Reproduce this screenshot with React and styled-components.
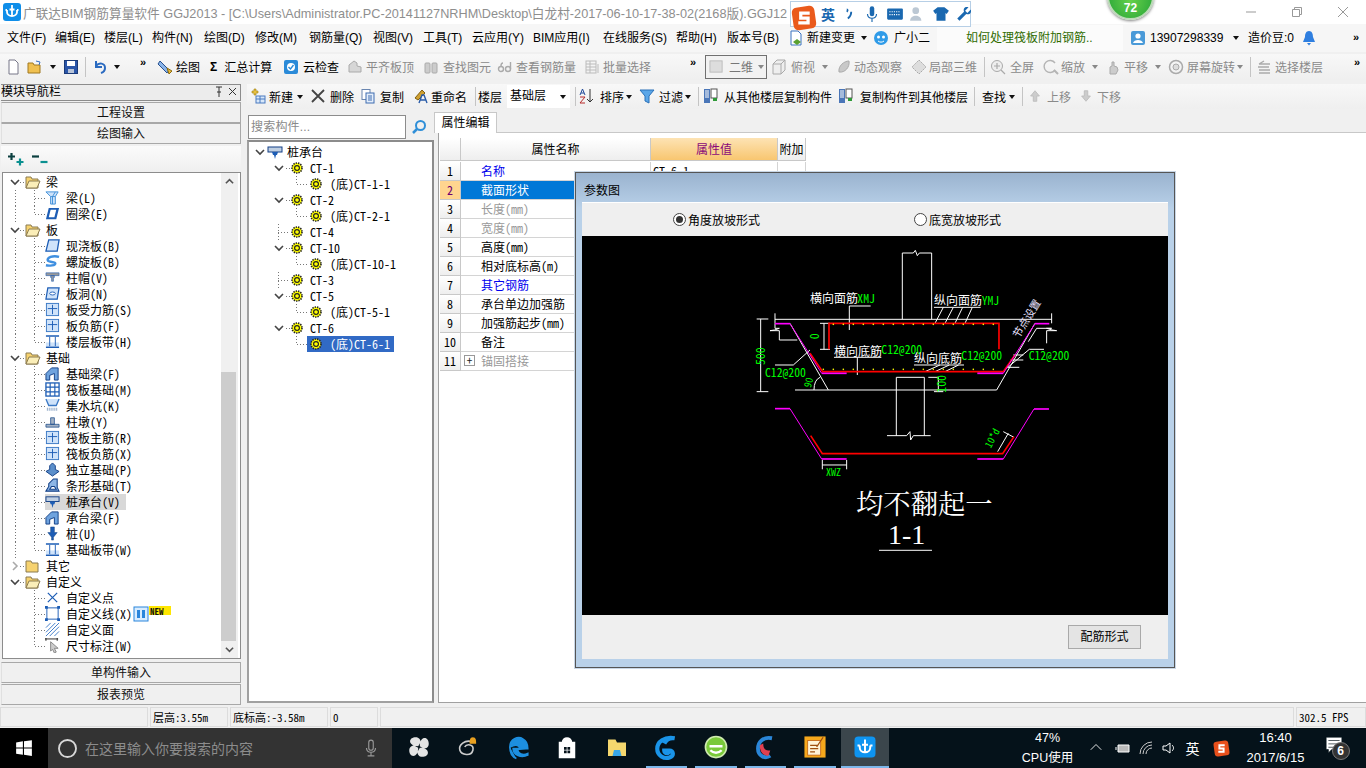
import React from "react";
import styled, { createGlobalStyle } from "styled-components";

const GlobalStyle = createGlobalStyle`
  html, body { margin: 0; padding: 0; background: #f0f0f0; }
  body { font-family: "Liberation Sans", "Noto Sans CJK SC", sans-serif; font-size: 12px; color: #000; overflow: hidden; }
  * { box-sizing: border-box; }
`;

const mono = `"Noto Sans Mono CJK SC", "Noto Sans CJK SC", "Liberation Mono", monospace`;

const Page = styled.div`
  position: relative;
  width: 1366px;
  height: 768px;
  overflow: hidden;
  display: flex;
  flex-direction: column;
  background: #f0f0f0;
`;

/* title bar */
const TitleBar = styled.div`
  height: 24px;
  background: #fff;
  display: flex;
  align-items: center;
  padding-left: 2px;
  color: #8e8e8e;
  font-size: 12.7px;
  white-space: nowrap;
`;
const TitleText = styled.span`
  margin-left: 1px;
  flex: 1;
  overflow: hidden;
`;
const WinBtn = styled.span`
  width: 46px;
  height: 24px;
  display: flex;
  align-items: center;
  justify-content: center;
`;

/* menu */
const MenuBar = styled.div`
  height: 28px;
  background: #f6f6f6;
  display: flex;
  align-items: center;
  position: relative;
  white-space: nowrap;
`;
const MenuItem = styled.span`
  position: absolute;
  left: ${(p) => p.$x}px;
  top: 6px;
  line-height: 16px;
  color: ${(p) => p.$color || "#000"};
  display: flex;
  align-items: center;
`;
const Hint = styled.div`
  position: absolute;
  left: 937px;
  top: 1px;
  width: 186px;
  height: 26px;
  background: #fbfbfb;
  color: #2f6b00;
  padding: 5px 0 0 29px;
  line-height: 16px;
`;

const Tools = styled.div`
  height: ${(p) => p.$h || 26}px;
  margin-top: ${(p) => p.$top || 0}px;
  margin-left: ${(p) => p.$left || 0}px;
  background: linear-gradient(#f8f8f8, #efefef);
  position: relative;
  white-space: nowrap;
`;
const Tool = styled.span`
  position: absolute;
  left: ${(p) => p.$x}px;
  top: 0;
  height: 100%;
  display: flex;
  align-items: center;
  gap: ${(p) => p.$gap ?? 2}px;
  color: ${(p) => (p.$off ? "#8a8a8a" : "#000")};
`;
const Sep = styled.i`
  position: absolute;
  left: ${(p) => p.$x}px;
  top: 3px;
  bottom: 3px;
  width: 1px;
  background: #c4c4c4;
`;
const Drop = styled.span`
  position: absolute;
  left: ${(p) => p.$x}px;
  top: ${(p) => p.$y ?? 11}px;
  border: 3px solid transparent;
  border-top: 4px solid ${(p) => (p.$off ? "#888" : "#111")};
`;
const More = styled.span`
  position: absolute;
  left: ${(p) => p.$x}px;
  top: ${(p) => p.$y ?? 1}px;
  font-size: 11px;
  font-weight: bold;
  letter-spacing: -1px;
  line-height: 14px;
`;
const Combo = styled.span`
  position: absolute;
  left: 705px;
  top: 1px;
  width: 62px;
  height: 24px;
  border: 1px solid #707070;
  background: #f2f2f2;
  display: flex;
  align-items: center;
  gap: 5px;
  padding-left: 3px;
  color: #777;
`;
const LevelBox = styled.span`
  position: absolute;
  left: 260px;
  top: 1px;
  width: 63px;
  height: 23px;
  background: #fff;
  padding: 4px 0 0 3px;
  line-height: 15px;
`;

/* work area */
const Work = styled.div`
  height: 623px;
  margin-top: 4px;
  display: flex;
`;

const Nav = styled.div`
  width: 241px;
  display: flex;
  flex-direction: column;
  padding-left: 1px;
`;
const NavHead = styled.div`
  height: 17px;
  border: 1px solid #8c8c8c;
  border-left: 0;
  background: #ececec;
  display: flex;
  align-items: center;
  justify-content: space-between;
  padding-right: 4px;
  line-height: 15px;
`;
const NavBtn = styled.div`
  height: 21px;
  margin-top: ${(p) => p.$top ?? 1}px;
  background: #f0f0f0;
  border: 1px solid #a8a8a8;
  border-left-color: #e0e0e0;
  text-align: center;
  line-height: 20px;
  color: #111;
`;
const ExpandBar = styled.div`
  height: 26px;
  margin-top: 2px;
  background: linear-gradient(#fbfbfb, #efefef);
  display: flex;
  align-items: center;
  gap: 6px;
  padding-left: 6px;
`;
const NavTree = styled.div`
  height: 487px;
  margin-left: 1px;
  border: 1px solid #8c8c8c;
  background: #fff;
  display: flex;
`;
const NavList = styled.div`
  flex: 1;
  padding-top: 1px;
`;
const dot = "#777";
const vDots = `repeating-linear-gradient(${dot} 0 1px, transparent 1px 3px)`;
const hDots = `repeating-linear-gradient(90deg, ${dot} 0 1px, transparent 1px 3px)`;
const NavRow = styled.div`
  height: 16px;
  display: flex;
  align-items: center;
  font-family: ${mono};
  line-height: 16px;
  padding-left: ${(p) => (p.$group ? 7 : 42)}px;
  background-repeat: no-repeat;
  background-image: ${(p) =>
    p.$group
      ? `${hDots}`
      : `${p.$trunk ? vDots + "," : ""} ${vDots}, ${hDots}`};
  background-size: ${(p) =>
    p.$group
      ? "6px 1px"
      : `${p.$trunk ? "1px 100%," : ""} 1px ${p.$last ? "50%" : "100%"}, 10px 1px`};
  background-position: ${(p) =>
    p.$group
      ? "17px 8px"
      : `${p.$trunk ? "12px 0," : ""} 31px 0, 32px 8px`};
`;
const RowLabel = styled.span`
  margin-left: ${(p) => p.$ml ?? 4}px;
  padding: 0 1px;
  display: inline-block;
  height: 16px;
`;
const PickWrap = styled.span`
  display: flex;
  align-items: center;
  height: 16px;
  background: ${(p) => (p.$picked ? "#d8d8d8" : "transparent")};
  padding-right: ${(p) => (p.$picked ? 5 : 0)}px;
`;
const Scroll = styled.div`
  width: 17px;
  background: #f0f0f0;
  display: flex;
  flex-direction: column;
  margin-right: 2px;
`;
const ScrollEnd = styled.div`
  height: 17px;
  display: flex;
  align-items: center;
  justify-content: center;
`;
const Thumb = styled.div`
  height: 269px;
  margin: auto 2px 0 0;
  background: #cdcdcd;
`;

const Side = styled.div`
  flex: 1;
  display: flex;
  flex-direction: column;
  min-width: 0;
`;
const Panes = styled.div`
  flex: 1;
  display: flex;
  padding-left: 6px;
  margin-top: 6px;
`;
const TreeCol = styled.div`
  width: 187px;
  display: flex;
  flex-direction: column;
`;
const SearchRow = styled.div`
  display: flex;
  align-items: center;
  height: 24px;
  gap: 5px;
`;
const Search = styled.div`
  width: 158px;
  height: 24px;
  margin-left: 1px;
  border: 1px solid #8c8c8c;
  background: #fff;
  color: #8a8a8a;
  padding: 3px 0 0 2px;
  line-height: 16px;
  letter-spacing: 0.2px;
`;
const Tree = styled.div`
  height: 563px;
  margin-top: 1px;
  background: #fff;
  border: 2px solid #a0a0a0;
  border-top-color: #8c8c8c;
  border-right-color: #8c8c8c;
  padding-top: 2px;
  font-family: ${mono};
`;
const TreeRow = styled.div`
  height: 16px;
  display: flex;
  align-items: center;
  line-height: 16px;
  padding-left: ${(p) => p.$pad}px;
  background-repeat: no-repeat;
  background-image: ${(p) =>
    p.$leaf ? `${vDots}, ${hDots}` : p.$root ? "none" : `${vDots}, ${hDots}`};
  background-size: ${(p) =>
    p.$leaf
      ? "1px 50%, 10px 1px"
      : p.$open
        ? "1px 0, 5px 1px"
        : "1px 100%, 10px 1px"};
  background-position: ${(p) =>
    p.$leaf ? "47px 0, 48px 8px" : p.$open ? "29px 0, 37px 8px" : "29px 0, 29px 8px"};
`;
const Gap = styled.i`
  display: block;
  flex: none;
  width: ${(p) => p.$w}px;
`;
const Picked = styled.span`
  display: flex;
  align-items: center;
  height: 16px;
  padding: 0 4px 0 3px;
  background: ${(p) => (p.$on ? "#316ac5" : "transparent")};
  color: ${(p) => (p.$on ? "#fff" : "#000")};
`;

const PropCol = styled.div`
  margin-left: 4px;
  flex: 1;
  display: flex;
  flex-direction: column;
  margin-top: -3px;
`;
const TabStrip = styled.div`
  height: 21px;
  border-bottom: 1px solid #c8c8c8;
  background: #f0f0f0;
`;
const Tab = styled.div`
  width: 63px;
  margin-left: -4px;
  height: 21px;
  background: #fff;
  border: 1px solid #c8c8c8;
  border-bottom: 0;
  text-align: center;
  line-height: 20px;
`;
const PropBody = styled.div`
  height: 570px;
  background: #fff;
  border: 1px solid #a0a0a0;
  border-top: 0;
  border-right: 0;
  padding: 5px 0 0 1px;
`;
const Sheet = styled.div`
  display: grid;
  grid-template-columns: 21px 190px 127px 28px;
  width: 366px;
  grid-auto-rows: 19px;
  font-family: ${mono};
  line-height: 18px;
`;
const Head = styled.div`
  height: 23px;
  background: ${(p) => (p.$on ? "linear-gradient(#fde3b4, #f8c670)" : "linear-gradient(#fff, #eee)")};
  border-right: 1px solid #c8c8c8;
  border-bottom: 1px solid #c8c8c8;
  text-align: center;
  line-height: 22px;
  color: ${(p) => (p.$on ? "#8a0a7a" : "#000")};
`;
const Num = styled.div`
  background: ${(p) => (p.$on ? "#ffd58f" : "linear-gradient(#fff, #eee)")};
  color: ${(p) => (p.$on ? "#700070" : "#000")};
  border-right: 1px solid #c8c8c8;
  border-bottom: 1px solid #c8c8c8;
  text-align: center;
  margin-top: 5px;
  margin-bottom: -5px;
`;
const Cell = styled.div`
  margin-top: 5px;
  margin-bottom: -5px;
  border-right: 1px solid #d4d4d4;
  border-bottom: 1px solid #d4d4d4;
  padding-left: ${(p) => p.$pad ?? 20}px;
  background: ${(p) => (p.$on ? "#0078d7" : "#fff")};
  color: ${(p) => p.$color || "#000"};
  display: flex;
  align-items: center;
  white-space: nowrap;
  overflow: hidden;
`;
const PlusBox = styled.span`
  width: 11px;
  height: 11px;
  margin: 0 6px 0 -17px;
  border: 1px solid #999;
  display: flex;
  align-items: center;
  justify-content: center;
  color: #222;
  font-size: 11px;
  line-height: 9px;
`;

/* status */
const Status = styled.div`
  height: 20px;
  margin-top: 1px;
  display: flex;
  gap: 2px;
  background: #f0f0f0;
`;
const StatusCell = styled.div`
  width: ${(p) => (p.$w ? `${p.$w}px` : "auto")};
  flex: ${(p) => (p.$w ? "none" : 1)};
  border: 1px solid #dcdcdc;
  padding-left: 2px;
  font-family: ${mono};
  font-size: 11px;
  line-height: 19px;
  white-space: nowrap;
`;

/* taskbar */
const Taskbar = styled.div`
  height: 40px;
  margin-top: 1px;
  background: #05121a;
  display: flex;
  align-items: stretch;
  color: #fff;
`;
const StartBtn = styled.div`
  width: 48px;
  background: #000;
  display: flex;
  align-items: center;
  justify-content: center;
`;
const SearchBox = styled.div`
  width: 344px;
  background: #333;
  display: flex;
  align-items: center;
  padding-left: 9px;
  color: #8c8c8c;
  font-size: 14px;
  gap: 7px;
`;
const SearchText = styled.span`
  flex: 1;
`;
const Apps = styled.div`
  display: flex;
  margin-left: 2px;
`;
const AppSlot = styled.div`
  width: ${(p) => (p.$active ? 48 : 41.5)}px;
  margin: 0 ${(p) => (p.$active ? 1 : 4)}px;
  display: flex;
  align-items: center;
  justify-content: center;
  background: ${(p) => (p.$active ? "#3b464c" : "transparent")};
  border-bottom: 2px solid ${(p) => (p.$line ? "#7db7ea" : "transparent")};
`;
const Tray = styled.div`
  flex: 1;
  display: flex;
  align-items: center;
  font-size: 12px;
`;
const Cpu = styled.div`
  width: 60px;
  margin-left: 128px;
  text-align: center;
  line-height: 20px;
  font-size: 12.5px;
`;
const TrayIcon = styled.span`
  width: ${(p) => p.$w || 24}px;
  display: flex;
  justify-content: center;
  font-size: 14px;
`;
const Clock = styled.div`
  width: 70px;
  margin-left: 5px;
  text-align: center;
  line-height: 20px;
  font-size: 13px;
`;
const Note = styled.div`
  position: relative;
  margin-left: 14px;
  width: 24px;
  height: 24px;
`;
const NoteBadge = styled.span`
  position: absolute;
  left: 7px;
  top: 6px;
  width: 18px;
  height: 18px;
  border-radius: 50%;
  background: #333;
  border: 1px solid #777;
  text-align: center;
  font-size: 12px;
  font-weight: bold;
  line-height: 16px;
`;

/* floating things */
const ImeBar = styled.div`
  position: absolute;
  left: 790px;
  top: 1px;
  width: 181px;
  height: 26px;
  border: 1px solid #b7cfe6;
  background: #fff;
  display: flex;
  align-items: center;
  padding-left: 30px;
  gap: 5px;
  color: #1a68b0;
  font-weight: bold;
  font-size: 14px;
`;
const ImeLogo = styled.span`
  position: absolute;
  left: 0;
  top: 3px;
  width: 26px;
  height: 24px;
`;
const Orb = styled.div`
  position: absolute;
  left: 1107px;
  top: -27px;
  width: 47px;
  height: 47px;
  border-radius: 50%;
  background: radial-gradient(circle at 50% 60%, #66d04a, #2eaa3a 70%);
  border: 2px solid #bcd9b8;
  box-shadow: 0 1px 3px rgba(0, 0, 0, 0.5);
  color: #fff;
  font-weight: bold;
  font-size: 12px;
  text-align: center;
  padding-top: 26px;
  line-height: 14px;
`;
const Dialog = styled.div`
  position: absolute;
  left: 575px;
  top: 172px;
  width: 600px;
  height: 496px;
  border: 1px solid #555;
  background: linear-gradient(#9ab3cf, #b9d1e9 36px);
  padding: 0 6px 8px;
  display: flex;
  flex-direction: column;
  box-shadow: 0 0 0 1px #c9d7e6;
`;
const DialogTitle = styled.div`
  height: 29px;
  padding: 11px 0 0 2px;
  line-height: 14px;
  font-size: 12px;
`;
const RadioBar = styled.div`
  height: 34px;
  background: #efefef;
  border-top: 1px solid #fff;
  display: flex;
  align-items: center;
  padding-left: 91px;
`;
const Radio = styled.label`
  width: ${(p) => p.$w}px;
  display: flex;
  align-items: center;
  gap: 2px;
`;
const RadioDot = styled.span`
  width: 13px;
  height: 13px;
  border-radius: 50%;
  border: 1px solid #444;
  background: #fff;
  display: flex;
  align-items: center;
  justify-content: center;
  &::after {
    content: "";
    width: 7px;
    height: 7px;
    border-radius: 50%;
    background: ${(p) => (p.$on ? "#333" : "transparent")};
  }
`;
const Canvas = styled.div`
  height: 379px;
  background: #000;
`;
const DialogFoot = styled.div`
  flex: 1;
  background: #efefef;
  display: flex;
  justify-content: flex-end;
  align-items: center;
  padding-right: 27px;
`;
const PlainButton = styled.div`
  width: 73px;
  height: 24px;
  background: #e4e4e4;
  border: 1px solid #a9a9a9;
  text-align: center;
  line-height: 22px;
`;

const Svg = ({ s = 16, children, vb = "0 0 16 16" }) => (
  <svg width={s} height={s} viewBox={vb} style={{ flex: "none", display: "block" }}>
    {children}
  </svg>
);

const Chevron = ({ open = true, color = "#444" }) => (
  <Svg s={10} vb="0 0 10 10">
    <path
      d={open ? "M1 3l4 4 4-4" : "M3 1l4 4-4 4"}
      fill="none"
      stroke={color}
      strokeWidth="1.6"
    />
  </Svg>
);

const Folder = ({ open = true }) => (
  <Svg>
    <path d="M1 3h5l1 2h6v9H1z" fill="#f6d26f" stroke="#8a7a50" />
    {open && <path d="M4 7h11l-3 7H1z" fill="#fbeeb8" stroke="#8a7a50" />}
  </Svg>
);

const blue = "#1d5db5";
const pale = "#cfe3fa";
const navIcons = {
  beam: (
    <g>
      <path d="M1 2h13l-3 5v8H6V7z" fill={pale} stroke="#3f8fd8" />
      <path d="M6 7h5M8 7v8M11 2L8 7" stroke="#3f8fd8" fill="none" />
    </g>
  ),
  ring: <path d="M4 2h11l-3 12H1zM6 4l-2 8h6l2-8z" fill={blue} fillRule="evenodd" />,
  slab: <path d="M4 2h11l-2 12H1z" fill={pale} stroke={blue} strokeWidth="1.4" />,
  spiral: (
    <path d="M15 3C8 1 2 4 3 7c1 2 8 1 8 3 0 2-6 3-10 2" fill="none" stroke="#3f8fe0" strokeWidth="2.6" />
  ),
  cap: <path d="M1 3h14v3H1zM6 6h4v2H9v4H7V8H6z" fill="#9a9a9a" stroke="#1d5db5" strokeWidth=".6" />,
  hole: (
    <g>
      <path d="M3 2h12l-2 12H1z" fill={pale} stroke={blue} strokeWidth="1.3" />
      <ellipse cx="8" cy="8" rx="3" ry="1.6" fill="#fff" stroke={blue} />
    </g>
  ),
  rebar: (
    <g>
      <rect x="1.5" y="1.5" width="13" height="13" fill={pale} stroke="#3a78c4" />
      <path d="M8 3v10M3 7h10" stroke={blue} />
    </g>
  ),
  band: (
    <g>
      <rect x="1" y="9" width="14" height="4" fill={pale} />
      <path d="M1 2h14M1 14h14" stroke={blue} strokeWidth="1.6" />
      <path d="M5 3v10M11 3v10" stroke={blue} />
    </g>
  ),
  fbeam: <path d="M1 15V8l6-6h7v13h-4V8L5 10v5z" fill="#6fa3de" stroke="#123f86" />,
  raft: (
    <g fill="none" stroke={blue}>
      <rect x="1" y="1" width="14" height="14" strokeWidth="1.4" />
      <path d="M1 5.5h14M1 10.5h14M5.5 1v14M10.5 1v14" strokeWidth="1.2" />
    </g>
  ),
  pit: (
    <g>
      <path d="M1 1l3 7h8l3-7" fill={pale} stroke="#3a78c4" strokeWidth="1.4" />
      <path d="M2 12h12" stroke="#8aa4c4" strokeWidth="3" strokeDasharray="1 1" />
    </g>
  ),
  pier: <path d="M1 11h14v3H1zM6 4h4v7H6z" fill="#a4b2c4" stroke="#1d4d8c" strokeWidth=".8" />,
  solo: <path d="M8 1l3 3v4l4 2-7 5-7-5 4-2V4z" fill="#5b8fcb" stroke="#123f86" />,
  strip: <path d="M1 14l3-5V6l5-5h4v9l2 4zM5 12l2-3h3l2 3z" fill="#8db6e6" fillRule="evenodd" stroke="#123f86" strokeWidth="1.1" />,
  capTop: (
    <g>
      <rect x="1" y="3" width="14" height="5" fill="#bfcfe2" stroke="#123f86" />
      <path d="M5 8h6l-1 3H9l-1 4-1-4H6z" fill={blue} />
    </g>
  ),
  pile: <path d="M6 1h4v6h3l-4 5v3H7v-3L3 7h3z" fill={blue} stroke="#0c3b7a" strokeWidth=".5" />,
  point: <path d="M3 3l10 10M13 3L3 13" stroke={blue} strokeWidth="1.3" />,
  line: (
    <g>
      <rect x="2" y="2" width="12" height="12" fill="none" stroke={blue} />
      <path d="M0 0h3v3H0zM13 0h3v3h-3zM0 13h3v3H0zM13 13h3v3h-3z" fill={blue} />
    </g>
  ),
  face: <path d="M1 6l5-5M1 11L11 1M1 15L15 1M5 15L15 5M10 15l5-5" stroke="#3b78c8" />,
  dim: (
    <g>
      <path d="M0 1h14M1 0v3M13 0v3" stroke="#222" />
      <path d="M6 4l8 7-4 0 2 4-2 1-2-4-2 2z" fill="#ccc" stroke="#888" />
    </g>
  ),
};

const Gear = ({ s = 12 }) => (
  <Svg s={s} vb="0 0 12 12">
    <circle cx="6" cy="6" r="5" fill="#ff0" />
    <circle cx="6" cy="6" r="5" fill="none" stroke="#222" strokeWidth="1.6" strokeDasharray="1.4 1" />
    <circle cx="6" cy="6" r="2.4" fill="none" stroke="#222" strokeWidth="1.2" />
  </Svg>
);

const t = {
  doc: <path d="M4 1h6l3 3v11H4z" fill="#fff" stroke="#778" />,
  open: (
    <g>
      <path d="M1 4h5l1 2h6v8H1z" fill="#f0c050" stroke="#a07820" />
      <path d="M9 2l4 1-1 3" fill="none" stroke="#3a70c0" />
    </g>
  ),
  save: (
    <g>
      <rect x="1.5" y="1.5" width="13" height="13" fill="#2a55a8" stroke="#1a3a78" />
      <rect x="4" y="2" width="8" height="5" fill="#fff" />
      <rect x="5" y="10" width="6" height="4" fill="#b8c4d8" />
    </g>
  ),
  undo: <path d="M4 2v6h6M4 7c3-4 9-3 9 2 0 2-1 4-4 5" fill="none" stroke="#2a6ac0" strokeWidth="2" />,
  draw: (
    <g>
      <path d="M3 2l9 9-2 3-9-9z" fill="#8ab4e8" stroke="#27508f" />
      <path d="M10 9l5 3-3 3z" fill="#e8b838" stroke="#8a6a10" />
    </g>
  ),
  cloud: (
    <g>
      <rect x="1" y="1" width="14" height="14" rx="2" fill="#2a8ad8" />
      <path d="M4 8a4 4 0 118 0 4 4 0 01-8 0" fill="#fff" />
      <path d="M5.5 8l2 2 3-4" fill="none" stroke="#2a8ad8" strokeWidth="1.4" />
    </g>
  ),
  grey: <path d="M2 13V6l5-4 3 2v3l4 1v5z" fill="#d6d6d6" stroke="#aaa" />,
  bino: (
    <g fill="#ccc" stroke="#aaa">
      <rect x="2" y="4" width="5" height="10" rx="1" />
      <rect x="9" y="4" width="5" height="10" rx="1" />
    </g>
  ),
  link: (
    <g fill="none" stroke="#aaa" strokeWidth="1.4">
      <circle cx="4" cy="10" r="2.5" />
      <circle cx="11" cy="10" r="2.5" />
      <path d="M4 7c0-2 1-3 2-3M13.500 10V3" />
    </g>
  ),
  batch: (
    <g stroke="#bbb" fill="none">
      <rect x="2" y="2" width="10" height="12" />
      <path d="M2 5h10M2 8h10M2 11h10M6 2v12M14 5v9" />
    </g>
  ),
  cube: <path d="M2 5l4-4h8v10l-4 4H2zM2 5h8v10M10 5l4-4" fill="#eee" stroke="#aaa" />,
  orbit: <path d="M3 13C2 7 8 2 13 2c1 6-4 12-10 11z" fill="#c8c8c8" stroke="#aaa" />,
  part: <path d="M8 1l7 7-7 7-7-7z" fill="#ddd" stroke="#aaa" strokeDasharray="2 1" />,
  zoom: (
    <g fill="none" stroke="#aaa">
      <circle cx="7" cy="7" r="5.5" fill="#eee" />
      <path d="M11 11l4 4M7 4v6M4 7h6" strokeWidth="1.2" />
    </g>
  ),
  zoomb: (
    <g fill="none" stroke="#b4b4b4" strokeWidth="1.4">
      <path d="M12 4A6 6 0 1012 11" />
      <path d="M11 11l4 4" strokeWidth="2" />
    </g>
  ),
  pan: <path d="M5 15V8l2-1V3h2v4l3 1 1 3-2 4z" fill="#ccc" stroke="#aaa" />,
  rotate: (
    <g fill="none" stroke="#aaa">
      <circle cx="8" cy="8" r="6.5" strokeWidth="1.5" />
      <circle cx="8" cy="8" r="3" fill="#ddd" />
    </g>
  ),
  floors: <path d="M3 5h11M2 8h11M3 11h11M3 14h11M8 2l-5 3" stroke="#aaa" fill="none" strokeWidth="1.4" />,
  add: (
    <g>
      <path d="M4 1h2v2h2v2H6v2H4V5H2V3h2z" fill="#e8c040" stroke="#a08010" strokeWidth=".6" />
      <rect x="6" y="8" width="9" height="7" fill="#d8e8fa" stroke="#4a7ac0" />
      <path d="M6 11h9M10 8v7" stroke="#4a7ac0" />
    </g>
  ),
  del: <path d="M2 2l12 12M14 2L2 14" stroke="#444" strokeWidth="1.8" />,
  copy: (
    <g>
      <rect x="2" y="1.5" width="8" height="10" fill="#fff" stroke="#6a86b0" />
      <rect x="6" y="5" width="8" height="10" fill="#e4eefb" stroke="#3f6cb0" />
      <path d="M8 8h4M8 10h4M8 12h4" stroke="#3f6cb0" />
    </g>
  ),
  rename: (
    <g>
      <path d="M3 10l7-8 3 3-7 7z" fill="#d0a030" stroke="#806010" />
      <path d="M7 15l3-8h2l3 8M8.500 12h5" fill="none" stroke="#2a5ca8" strokeWidth="1.400" />
    </g>
  ),
  sort: (
    <g>
      <path d="M1 7l2.500-6L6 7M2 5h3" fill="none" stroke="#224a9a" />
      <path d="M1 9h5l-5 6h5" fill="none" stroke="#b82a2a" />
      <path d="M11 1v13M8 11l3 3 3-3" fill="none" stroke="#333" />
    </g>
  ),
  filter: <path d="M1 2h14l-5 6v7l-4-2V8z" fill="#5aa6e8" stroke="#2a70b8" />,
  fromF: (
    <g>
      <rect x="1" y="1" width="6" height="14" fill="#4a76b8" />
      <path d="M2 3h4M2 5h4M2 7h4M2 9h4" stroke="#fff" />
      <rect x="8" y="1" width="6" height="9" fill="#fff" stroke="#555" />
      <path d="M10 10h4v3h-4z" fill="#2f9a38" />
    </g>
  ),
  up: <path d="M8 2l5 6h-3v6H6V8H3z" fill="#ccc" stroke="#bbb" />,
  down: <path d="M8 14l5-6h-3V2H6v6H3z" fill="#ccc" stroke="#bbb" />,
  change: (
    <g>
      <path d="M3 1h7l3 3v11H3z" fill="#fff" stroke="#3a72c0" />
      <path d="M9 9l4 3-4 3-4-3z" fill="#5aa030" />
    </g>
  ),
  bot: (
    <g>
      <ellipse cx="8" cy="8" rx="7" ry="7" fill="#2f9be8" />
      <circle cx="5.5" cy="7" r="1.5" fill="#fff" />
      <circle cx="10.5" cy="7" r="1.5" fill="#fff" />
      <path d="M5 11c2 1.5 4 1.5 6 0" stroke="#fff" fill="none" />
    </g>
  ),
  user: (
    <g>
      <rect x="1" y="1" width="14" height="14" rx="2" fill="#4a9ad8" />
      <circle cx="8" cy="6" r="2.6" fill="#fff" />
      <path d="M3 13c1-4 9-4 10 0z" fill="#fff" />
    </g>
  ),
  bell: <path d="M8 1c-3 0-4 3-4 6l-2 5h12l-2-5c0-3-1-6-4-6zM6 13h4l-2 2.5z" fill="#2f7fe0" />,
};

const Logo = () => (
  <Svg s={20} vb="0 0 20 20">
    <rect x="1" y="1" width="18" height="18" rx="3" fill="#0f8ee9" />
    <path d="M10 3v10M5 8H3.500M15 8h1.500M5 8v2a5 4 0 0010 0V8M7.500 7.500h5" fill="none" stroke="#fff" strokeWidth="1.800" />
  </Svg>
);

const groups = [
  {
    name: "梁",
    items: [["beam", "梁(L)"], ["ring", "圈梁(E)"]],
  },
  {
    name: "板",
    items: [
      ["slab", "现浇板(B)"],
      ["spiral", "螺旋板(B)"],
      ["cap", "柱帽(V)"],
      ["hole", "板洞(N)"],
      ["rebar", "板受力筋(S)"],
      ["rebar", "板负筋(F)"],
      ["band", "楼层板带(H)"],
    ],
  },
  {
    name: "基础",
    items: [
      ["fbeam", "基础梁(F)"],
      ["raft", "筏板基础(M)"],
      ["pit", "集水坑(K)"],
      ["pier", "柱墩(Y)"],
      ["rebar", "筏板主筋(R)"],
      ["rebar", "筏板负筋(X)"],
      ["solo", "独立基础(P)"],
      ["strip", "条形基础(T)"],
      ["capTop", "桩承台(V)", true],
      ["fbeam", "承台梁(F)"],
      ["pile", "桩(U)"],
      ["band", "基础板带(W)"],
    ],
  },
  { name: "其它", closed: true, items: [] },
  {
    name: "自定义",
    items: [
      ["point", "自定义点"],
      ["line", "自定义线(X)", false, true],
      ["face", "自定义面"],
      ["dim", "尺寸标注(W)"],
    ],
  },
];

const NavTreeList = () => (
  <NavList>
    {groups.map((g, gi) => (
      <React.Fragment key={g.name}>
        <NavRow $group>
          <Chevron open={!g.closed} color={g.closed ? "#aaa" : "#444"} />
          <Gap $w={5} />
          <Folder open={!g.closed} />
          <RowLabel $ml={4}>{g.name}</RowLabel>
        </NavRow>
        {g.items.map(([icon, label, picked, isNew], i) => (
          <NavRow key={label} $trunk={gi < 4} $last={i === g.items.length - 1}>
            <PickWrap $picked={picked}>
              <Svg s={15}>{navIcons[icon]}</Svg>
              <RowLabel $ml={5}>{label}</RowLabel>
            </PickWrap>
            {isNew && (
              <>
                <Svg s={16}>
                  <rect x="1" y="1" width="14" height="14" fill="#d8ecff" stroke="#2a86dc" />
                  <path d="M4 4h3v8H4zM9 4h3v8H9z" fill="#2a86dc" />
                </Svg>
                <Svg s={22} vb="0 0 22 16">
                  <rect x="0" y="0" width="22" height="9" fill="#ffe600" />
                  <text x="1" y="8.500" fontSize="9" fontWeight="bold" fill="#111">NEW</text>
                </Svg>
              </>
            )}
          </NavRow>
        ))}
      </React.Fragment>
    ))}
  </NavList>
);

const ctTree = [
  ["CT-1", "(底)CT-1-1"],
  ["CT-2", "(底)CT-2-1"],
  ["CT-4"],
  ["CT-10", "(底)CT-10-1"],
  ["CT-3"],
  ["CT-5", "(底)CT-5-1"],
  ["CT-6", "(底)CT-6-1"],
];

const props_ = [
  ["名称", "#0000ee"],
  ["截面形状", "#fff", true],
  ["长度(mm)", "#999"],
  ["宽度(mm)", "#999"],
  ["高度(mm)"],
  ["相对底标高(m)"],
  ["其它钢筋", "#0000ee"],
  ["承台单边加强筋"],
  ["加强筋起步(mm)"],
  ["备注"],
  ["锚固搭接", "#999"],
];

const W = ({ d }) => <path d={d} fill="none" stroke="#fff" strokeWidth="3" />;
const R = ({ d, w = 5 }) => <path d={d} fill="none" stroke="#f00" strokeWidth={w} />;
const M = ({ d, w = 3 }) => <path d={d} fill="none" stroke="#f0f" strokeWidth={w} />;
const CadText = ({ x, y, c = "#0f0", size = 35, rot, children, family = mono }) => (
  <text
    x={x}
    y={y}
    fill={c}
    fontSize={size}
    fontFamily={family}
    transform={rot ? `rotate(${rot} ${x} ${y})` : undefined}
  >
    {children}
  </text>
);

const Drawing = () => {
  const topDots = Array.from({ length: 17 }, (_, i) => 280 + i * 30);
  const botDots = Array.from({ length: 18 }, (_, i) => 250 + i * 30);
  return (
    <svg width="585" height="379" viewBox="0 0 585 379" style={{ display: "block" }}>
      <g transform="translate(158 24) scale(.3333)">
        <W d="M487 178V-21H520l6-8 6 16 6-8H575V178" />
        <W d="M105 178H935" />
        <W d="M105 160V190M105 190V205H118L104 210 90 212H118V240H172" />
        <W d="M935 160V190M935 205H920L936 210 950 212H920V250M935 205H890L865 245" />
        <W d="M150 190L265 390M885 190L770 390M165 390H770" />
        <W d="M62 177V395M50 177H85M50 395H85" />
        <W d="M252 190V268M240 190H270M240 268H270" />
        <W d="M105 315H160L210 270" />
        <W d="M222 390Q222 360 240 352" />
        <W d="M469 527V352H553V527M441 527H500L510 515 512 540 520 527H572" />
        <W d="M565 352H595V395M582 395H610" />
        <W d="M328 210V138H392" />
        <W d="M582 142H722M610 142L585 190M640 142L615 190M668 142L645 190M697 142L675 190" />
        <W d="M282 292H424M352 292V345" />
        <W d="M522 315H672M600 315L555 335M628 315L585 335M656 315L615 335" />
        <W d="M912 268H868L800 325M850 285H820M850 300H812M838 322H800" />
        <W d="M773 575L805 520M822 532L790 515" />
        <W d="M247 600V628M320 600V628M247 615H320" />
        <W d="M417 871H576" />
        <R d="M267 268V190H777V268" />
        <R d="M210 280L248 335H790L825 285" />
        <M d="M105 191H150" w={5} />
        <M d="M150 191L245 340" />
        <M d="M245 340H320" w={5} />
        <M d="M712 340H790" w={5} />
        <M d="M790 340L885 191" />
        <M d="M885 191H928" w={5} />
        <M d="M105 446H150" w={5} />
        <M d="M150 446L245 597" />
        <M d="M245 597H320" w={5} />
        <M d="M712 597H790" w={5} />
        <M d="M790 597L882 447" />
        <M d="M882 447H927" w={5} />
        <R d="M212 527L247 581H788L822 530" />
        {topDots.map((x) => (
          <circle key={x} cx={x} cy={193} r={2.5} fill="#ff0" />
        ))}
        {botDots.map((x) => (
          <circle key={x} cx={x} cy={328} r={2.5} fill="#ff0" />
        ))}
        <CadText x={210} y={128} c="#fff" size={36}>横向面筋</CadText>
        <CadText x={352} y={128}>XMJ</CadText>
        <CadText x={582} y={135} c="#fff" size={36}>纵向面筋</CadText>
        <CadText x={725} y={135}>YMJ</CadText>
        <CadText x={282} y={287} c="#fff" size={36}>横向底筋</CadText>
        <CadText x={424} y={282}>C12@200</CadText>
        <CadText x={522} y={309} c="#fff" size={36}>纵向底筋</CadText>
        <CadText x={664} y={300}>C12@200</CadText>
        <CadText x={866} y={300}>C12@200</CadText>
        <CadText x={75} y={350}>C12@200</CadText>
        <CadText x={75} y={315} rot={-90}>500</CadText>
        <CadText x={238} y={238} rot={-90}>0</CadText>
        <CadText x={618} y={398} rot={-90}>100</CadText>
        <CadText x={212} y={385} rot={-75} size={30}>90</CadText>
        <CadText x={752} y={566} rot={-62} size={30}>10*d</CadText>
        <CadText x={258} y={647} size={30}>XWZ</CadText>
        <CadText x={836} y={236} c="#e8e0ff" size={32} rot={-58}>节点设置</CadText>
        <CadText x={348} y={762} c="#fff" size={82} family={`"Noto Serif CJK SC", "Noto Sans CJK SC", serif`}>均不翻起一</CadText>
        <CadText x={444} y={852} c="#fff" size={84} family={`"Liberation Serif", serif`}>1-1</CadText>
      </g>
    </svg>
  );
};

const AppIcon = ({ kind }) => {
  switch (kind) {
    case "fan":
      return (
        <Svg s={26}>
          <path d="M7.500 7.500C4 7.500 2.500 6 2.500 4.500S4 2 6 2s3 1.500 3 3zM8.500 7.500C8.500 4 10 2.500 11.500 2.500S14 4 14 6s-1.500 3-3 3zM8.500 8.500c3.500 0 5 1.500 5 3S12 14 10 14s-3-1.500-3-3zM7.500 8.500c0 3.500-1.500 5-3 5S2 12 2 10s1.500-3 3-3z" fill="#e4e4e4" />
        </Svg>
      );
    case "swirl":
      return (
        <Svg s={26}>
          <path d="M11 5C6 3 2 7 3 10s7 4 8 0-4-4-5-2" fill="none" stroke="#ccc" />
          <path d="M11 2c-2 0-2 2-2 4h4c0-2 0-4-2-4z" fill="#e8a020" />
        </Svg>
      );
    case "edge":
      return (
        <Svg s={26}>
          <path d="M14 9H5c0 4 5 6 9 4v-1c-3 1.500-6 0-6-2 M3 8c0-5 5-7 8-5 2 1 3 3 3 6H9c0-2-2-3-6-1z M3 8c0 4 1 6 4 7" fill="#1d8fe0" stroke="#1d8fe0" />
        </Svg>
      );
    case "store":
      return (
        <Svg s={24}>
          <path d="M3 5h10v10H3zM5 5c0-4 6-4 6 0" fill="#fff" stroke="#fff" />
          <path d="M6 8h1.800v1.800H6zM8.300 8h1.800v1.800H8.300zM6 10.300h1.800v1.800H6zM8.300 10.300h1.800v1.800H8.300z" fill="#05121a" />
        </Svg>
      );
    case "folder":
      return (
        <Svg s={24}>
          <path d="M2 3h5l1 2h6v9H2z" fill="#f5d76e" />
          <path d="M6 10h4l1 4H5z" fill="#38a6e8" />
        </Svg>
      );
    case "g":
      return (
        <Svg s={28}>
          <path d="M13 3C7 2 3 5 3 9s4 6 7 5 2-4 0-4H7c0 2 3 2 3 0 M13 3c-3-.5-5 1-6 3" fill="none" stroke="#1a94e8" strokeWidth="2.400" />
        </Svg>
      );
    case "ie":
      return (
        <Svg s={26}>
          <circle cx="8" cy="8" r="6.500" fill="#7ac93a" stroke="#cfeab0" />
          <path d="M4 7.500h8M4.500 10c2 2 5 2 7 0" stroke="#fff" fill="none" strokeWidth="1.500" />
        </Svg>
      );
    case "g2":
      return (
        <Svg s={28}>
          <path d="M12 3C7 2 4 5 4 9s4 6 7 4" fill="none" stroke="#2a86d8" strokeWidth="2.200" />
          <path d="M5 7c0 4 2 6 5 6l1-3c-3 0-4-1-4-4z" fill="#e04050" />
        </Svg>
      );
    case "note":
      return (
        <Svg s={26}>
          <rect x="1.500" y="1.500" width="13" height="13" fill="#f6a81c" />
          <rect x="3.500" y="4" width="8" height="9" fill="#fff4d8" stroke="#c06010" strokeWidth=".5" />
          <path d="M5 7h5M5 9h5M5 11h3M9 8l4-6" stroke="#a05010" strokeWidth=".8" />
        </Svg>
      );
    default:
      return (
        <Svg s={24}>
          <rect x="1" y="1" width="14" height="14" rx="2.500" fill="#0e94f0" />
          <path d="M8 3v8M4.500 7H3M11.500 7H13M4.500 7v1.500a3.500 3 0 007 0V7M6 6.500h4" fill="none" stroke="#fff" strokeWidth="1.300" />
        </Svg>
      );
  }
};

export default function App() {
  return (
    <Page>
      <GlobalStyle />
      <TitleBar>
        <Logo />
        <TitleText>
          广联达BIM钢筋算量软件 GGJ2013 - [C:\Users\Administrator.PC-20141127NRHM\Desktop\白龙村-2017-06-10-17-38-02(2168版).GGJ12
        </TitleText>
        <WinBtn>
          <Svg s={12} vb="0 0 12 12"><path d="M1 6h10" stroke="#999" /></Svg>
        </WinBtn>
        <WinBtn>
          <Svg s={12} vb="0 0 12 12"><path d="M1.500 3.500h7v7h-7zM3.500 3.500v-2h7v7h-2" fill="none" stroke="#999" /></Svg>
        </WinBtn>
        <WinBtn>
          <Svg s={12} vb="0 0 12 12"><path d="M1 1l10 10M11 1L1 11" stroke="#999" /></Svg>
        </WinBtn>
      </TitleBar>

      <MenuBar>
        {[
          [7, "文件(F)"], [55, "编辑(E)"], [104, "楼层(L)"], [152, "构件(N)"], [204, "绘图(D)"],
          [255, "修改(M)"], [309, "钢筋量(Q)"], [373, "视图(V)"], [423, "工具(T)"], [472, "云应用(Y)"],
          [533, "BIM应用(I)"], [603, "在线服务(S)"], [676, "帮助(H)"], [727, "版本号(B)"],
        ].map(([x, s]) => (
          <MenuItem key={s} $x={x}>{s}</MenuItem>
        ))}
        <MenuItem $x={788}><Svg>{t.change}</Svg></MenuItem>
        <MenuItem $x={807}>新建变更</MenuItem>
        <Drop $x={861} $y={12} />
        <MenuItem $x={873}><Svg>{t.bot}</Svg></MenuItem>
        <MenuItem $x={894}>广小二</MenuItem>
        <Hint>如何处理筏板附加钢筋..</Hint>
        <MenuItem $x={1130}><Svg>{t.user}</Svg></MenuItem>
        <MenuItem $x={1150}>13907298339</MenuItem>
        <Drop $x={1233} $y={12} />
        <MenuItem $x={1248}>造价豆:0</MenuItem>
        <MenuItem $x={1301}><Svg>{t.bell}</Svg></MenuItem>
        <More $x={1353} $y={6}>»</More>
      </MenuBar>

      <Tools $top={2}>
        <Tool $x={5}><Svg>{t.doc}</Svg></Tool>
        <Tool $x={27}><Svg>{t.open}</Svg></Tool>
        <Drop $x={50} />
        <Tool $x={63}><Svg>{t.save}</Svg></Tool>
        <Sep $x={85} />
        <Tool $x={92}><Svg>{t.undo}</Svg></Tool>
        <Drop $x={114} />
        <More $x={140}>»</More>
        <Tool $x={157} $gap={3}><Svg>{t.draw}</Svg>绘图</Tool>
        <Tool $x={210} $gap={7}><b>Σ</b>汇总计算</Tool>
        <Tool $x={283} $gap={4}><Svg>{t.cloud}</Svg>云检查</Tool>
        <Tool $x={347} $off $gap={3}><Svg>{t.grey}</Svg>平齐板顶</Tool>
        <Tool $x={423} $off $gap={4}><Svg>{t.bino}</Svg>查找图元</Tool>
        <Tool $x={497} $off $gap={3}><Svg>{t.link}</Svg>查看钢筋量</Tool>
        <Tool $x={584} $off $gap={3}><Svg>{t.batch}</Svg>批量选择</Tool>
        <More $x={690}>»</More>
        <Combo>
          <Svg s={15}><rect x="1" y="2" width="13" height="12" fill="#ddd" stroke="#bbb" /></Svg>
          二维
        </Combo>
        <Drop $x={758} $off />
        <Tool $x={771} $off $gap={4}><Svg>{t.cube}</Svg>俯视</Tool>
        <Drop $x={822} $off />
        <Tool $x={836} $off $gap={2}><Svg>{t.orbit}</Svg>动态观察</Tool>
        <Tool $x={911} $off $gap={2}><Svg>{t.part}</Svg>局部三维</Tool>
        <Sep $x={984} />
        <Tool $x={990} $off $gap={4}><Svg>{t.zoom}</Svg>全屏</Tool>
        <Tool $x={1043} $off $gap={2}><Svg>{t.zoomb}</Svg>缩放</Tool>
        <Drop $x={1092} $off />
        <Tool $x={1105} $off $gap={3}><Svg>{t.pan}</Svg>平移</Tool>
        <Drop $x={1155} $off />
        <Tool $x={1168} $off $gap={3}><Svg>{t.rotate}</Svg>屏幕旋转</Tool>
        <Drop $x={1237} $off />
        <Sep $x={1250} />
        <Tool $x={1256} $off $gap={3}><Svg>{t.floors}</Svg>选择楼层</Tool>
        <More $x={1354}>»</More>
      </Tools>

      <Work>
        <Nav>
          <NavHead>
            模块导航栏
            <Svg s={22} vb="0 0 22 12">
              <path d="M2 1h6M5 1v7M3 6h4M5 8v3M15 2l7 7M22 2l-7 7" stroke="#333" fill="none" />
            </Svg>
          </NavHead>
          <NavBtn>工程设置</NavBtn>
          <NavBtn $top={0}>绘图输入</NavBtn>
          <ExpandBar>
            <Svg s={18} vb="0 0 18 14">
              <path d="M4.500 1v7M1 4.500h7" stroke="#0c4040" strokeWidth="2.200" />
              <path d="M13 6.500v7M9.500 10h7" stroke="#0a9090" strokeWidth="2.200" />
            </Svg>
            <Svg s={18} vb="0 0 18 14">
              <path d="M1 4.500h7" stroke="#0c4040" strokeWidth="2.200" />
              <path d="M9.500 10h7" stroke="#0a9090" strokeWidth="2.200" />
            </Svg>
          </ExpandBar>
          <NavTree>
            <NavTreeList />
            <Scroll>
              <ScrollEnd>
                <Svg s={9} vb="0 0 10 10"><path d="M1 7l4-4 4 4" fill="none" stroke="#555" strokeWidth="1.800" /></Svg>
              </ScrollEnd>
              <Thumb />
              <ScrollEnd>
                <Svg s={9} vb="0 0 10 10"><path d="M1 3l4 4 4-4" fill="none" stroke="#555" strokeWidth="1.800" /></Svg>
              </ScrollEnd>
            </Scroll>
          </NavTree>
          <NavBtn $top={3}>单构件输入</NavBtn>
          <NavBtn>报表预览</NavBtn>
        </Nav>

        <Side>
          <Tools $left={6} $h={25}>
            <Tool $x={3} $gap={3}><Svg>{t.add}</Svg>新建</Tool>
            <Drop $x={50} />
            <Tool $x={63} $gap={4}><Svg>{t.del}</Svg>删除</Tool>
            <Tool $x={113} $gap={4}><Svg>{t.copy}</Svg>复制</Tool>
            <Tool $x={165} $gap={3}><Svg>{t.rename}</Svg>重命名</Tool>
            <Sep $x={228} />
            <Tool $x={231}>楼层</Tool>
            <LevelBox>基础层</LevelBox>
            <Drop $x={313} />
            <Sep $x={328} />
            <Tool $x={332} $gap={5}><Svg>{t.sort}</Svg>排序</Tool>
            <Drop $x={379} />
            <Tool $x={392} $gap={4}><Svg>{t.filter}</Svg>过滤</Tool>
            <Drop $x={438} />
            <Sep $x={451} />
            <Tool $x={456} $gap={5}><Svg>{t.fromF}</Svg>从其他楼层复制构件</Tool>
            <Tool $x={591} $gap={6}><Svg>{t.fromF}</Svg>复制构件到其他楼层</Tool>
            <Sep $x={727} />
            <Tool $x={735}>查找</Tool>
            <Drop $x={762} />
            <Sep $x={775} />
            <Tool $x={781} $off $gap={5}><Svg s={14}>{t.up}</Svg>上移</Tool>
            <Tool $x={832} $off $gap={4}><Svg s={14}>{t.down}</Svg>下移</Tool>
          </Tools>
          <Panes>
            <TreeCol>
              <SearchRow>
                <Search>搜索构件...</Search>
                <Svg s={16}>
                  <circle cx="9.500" cy="6.500" r="4.500" fill="none" stroke="#2f8fd8" strokeWidth="2" />
                  <path d="M6 10l-4 4" stroke="#2f8fd8" strokeWidth="2.500" />
                </Svg>
              </SearchRow>
              <Tree>
                <TreeRow $pad={6} $root>
                  <Chevron />
                  <Gap $w={2} />
                  <Svg s={16}>{navIcons.capTop}</Svg>
                  <Gap $w={4} />
                  桩承台
                </TreeRow>
                {ctTree.map(([name, child]) => (
                  <React.Fragment key={name}>
                    <TreeRow $pad={child ? 25 : 42} $open={!!child}>
                      {child && <Chevron />}
                      {child && <Gap $w={7} />}
                      <Gear />
                      <Gap $w={7} />
                      {name}
                    </TreeRow>
                    {child && (
                      <TreeRow $pad={58} $leaf>
                        <Picked $on={name === "CT-6"}>
                          <Gear />
                          <Gap $w={8} />
                          {child}
                        </Picked>
                      </TreeRow>
                    )}
                  </React.Fragment>
                ))}
              </Tree>
            </TreeCol>
            <PropCol>
              <TabStrip>
                <Tab>属性编辑</Tab>
              </TabStrip>
              <PropBody>
                <Sheet>
                  <Head />
                  <Head>属性名称</Head>
                  <Head $on>属性值</Head>
                  <Head>附加</Head>
                  {props_.map(([label, color, on], i) => (
                    <React.Fragment key={label}>
                      <Num $on={on}>{i + 1}</Num>
                      <Cell $on={on} $color={color}>
                        {i === 10 && <PlusBox>+</PlusBox>}
                        {label}
                      </Cell>
                      <Cell $pad={2}>{i === 0 ? "CT-6-1" : ""}</Cell>
                      <Cell $pad={0} />
                    </React.Fragment>
                  ))}
                </Sheet>
              </PropBody>
            </PropCol>
          </Panes>
        </Side>
      </Work>

      <Status>
        <StatusCell $w={148} />
        <StatusCell $w={78}>层高:3.55m</StatusCell>
        <StatusCell $w={98}>底标高:-3.58m</StatusCell>
        <StatusCell $w={48}>0</StatusCell>
        <StatusCell />
        <StatusCell $w={70}>302.5 FPS</StatusCell>
      </Status>

      <Taskbar>
        <StartBtn>
          <Svg s={18}>
            <path d="M1 3l6-1v5.500H1zM8 2l7-1v6.500H8zM1 8.500h6V14l-6-1zM8 8.500h7V15l-7-1z" fill="#fff" />
          </Svg>
        </StartBtn>
        <SearchBox>
          <Svg s={21}>
            <circle cx="8" cy="8" r="6.500" fill="none" stroke="#d8d8d8" strokeWidth="1.400" />
          </Svg>
          <SearchText>在这里输入你要搜索的内容</SearchText>
          <Svg s={18}>
            <rect x="6" y="1" width="4" height="9" rx="2" fill="none" stroke="#999" />
            <path d="M4 8c0 5 8 5 8 0M8 12v3M5 15h6" fill="none" stroke="#999" />
          </Svg>
          <Gap $w={5} />
        </SearchBox>
        <Apps>
          <AppSlot><AppIcon kind="fan" /></AppSlot>
          <AppSlot><AppIcon kind="swirl" /></AppSlot>
          <AppSlot><AppIcon kind="edge" /></AppSlot>
          <AppSlot><AppIcon kind="store" /></AppSlot>
          <AppSlot><AppIcon kind="folder" /></AppSlot>
          <AppSlot $line><AppIcon kind="g" /></AppSlot>
          <AppSlot $line><AppIcon kind="ie" /></AppSlot>
          <AppSlot $line><AppIcon kind="g2" /></AppSlot>
          <AppSlot $line><AppIcon kind="note" /></AppSlot>
          <AppSlot $line $active><AppIcon kind="app" /></AppSlot>
        </Apps>
        <Tray>
          <Cpu>
            47%
            <br />
            CPU使用
          </Cpu>
          <TrayIcon $w={36}>
            <Svg s={14}><path d="M2 10l6-6 6 6" fill="none" stroke="#fff" /></Svg>
          </TrayIcon>
          <TrayIcon $w={18}>
            <Svg s={16}><path d="M3 5h11v7H3zM1 7v3" fill="#bbb" stroke="#fff" /></Svg>
          </TrayIcon>
          <TrayIcon $w={28}>
            <Svg s={16}><path d="M2 14a12 12 0 0112-12M5 14a9 9 0 019-9M8 14a6 6 0 016-6" fill="none" stroke="#ccc" /></Svg>
          </TrayIcon>
          <TrayIcon $w={18}>
            <Svg s={16}><path d="M2 6h3l4-3v10l-4-3H2zM11 5c2 2 2 4 0 6" fill="none" stroke="#fff" /></Svg>
          </TrayIcon>
          <TrayIcon $w={30}>英</TrayIcon>
          <TrayIcon $w={28}>
            <Svg s={17}>
              <rect x="1" y="1" width="14" height="14" rx="3" fill="#e8501c" transform="rotate(-8 8 8)" />
              <path d="M11 5H6v3h4v3H5" fill="none" stroke="#fff" strokeWidth="1.800" />
            </Svg>
          </TrayIcon>
          <Clock>
            16:40
            <br />
            2017/6/15
          </Clock>
          <Note>
            <Svg s={18}><path d="M1 1h14v11H6l-3 3v-3H1zM3 4h10M3 7h10M3 10h10" fill="#fff" stroke="#05121a" strokeWidth=".6" /></Svg>
            <NoteBadge>6</NoteBadge>
          </Note>
        </Tray>
      </Taskbar>

      <ImeBar>
        <ImeLogo>
          <Svg s={26}>
            <rect x="1" y="1" width="14" height="14" rx="3" fill="#ea5a1c" transform="rotate(-8 8 8)" />
            <path d="M11.500 5H6v3h4.500v3H4.500" fill="none" stroke="#fff" strokeWidth="2" />
          </Svg>
        </ImeLogo>
        英
        <Svg s={18}><path d="M6 4c1 0 1 1 0 2M10 6c0 4-2 5-3 6" fill="none" stroke="#1a68b0" strokeWidth="1.600" /></Svg>
        <Svg s={18}><rect x="6" y="1" width="4" height="9" rx="2" fill="#1a68b0" /><path d="M4 8c0 5 8 5 8 0M8 12v3" fill="none" stroke="#1a68b0" /></Svg>
        <Svg s={18}><rect x="1" y="3" width="14" height="10" rx="1" fill="#1a68b0" /><path d="M3 6h10M3 8.500h10" stroke="#fff" strokeDasharray="1 1" /></Svg>
        <Svg s={18}><circle cx="6" cy="5" r="3" fill="#bcc8d4" /><path d="M1 14c0-6 10-6 10 0z" fill="#bcc8d4" /></Svg>
        <Svg s={18}><path d="M1 5l4-3h6l4 3-2 3-1-1v7H4V7L3 8z" fill="#1a68b0" /></Svg>
        <Svg s={18}><path d="M14 4l-3 3-2-2 3-3c-3-1-5 1-4 4l-6 6 2 2 6-6c3 1 5-1 4-4z" fill="#1a68b0" /></Svg>
      </ImeBar>
      <Orb>72</Orb>

      <Dialog>
        <DialogTitle>参数图</DialogTitle>
        <RadioBar>
          <Radio $w={241}>
            <RadioDot $on />
            角度放坡形式
          </Radio>
          <Radio $w={100}>
            <RadioDot />
            底宽放坡形式
          </Radio>
        </RadioBar>
        <Canvas>
          <Drawing />
        </Canvas>
        <DialogFoot>
          <PlainButton>配筋形式</PlainButton>
        </DialogFoot>
      </Dialog>
    </Page>
  );
}
